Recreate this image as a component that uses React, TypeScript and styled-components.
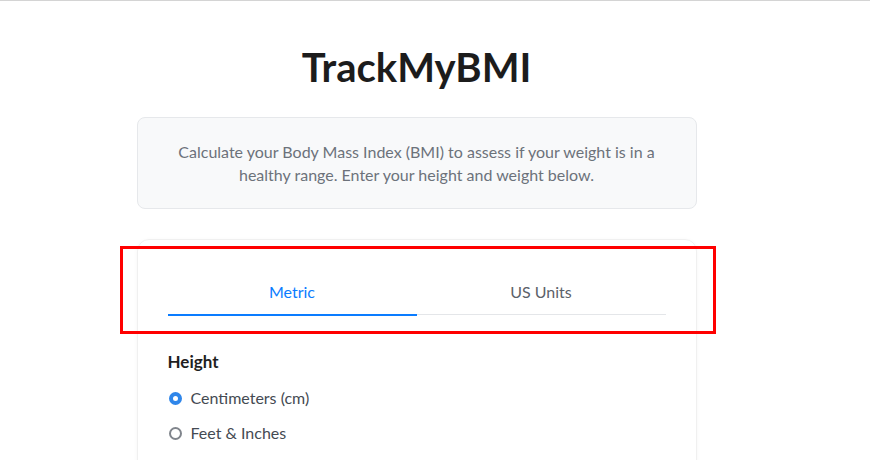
import { useState } from "react";
import styled, { createGlobalStyle } from "styled-components";

const GlobalStyle = createGlobalStyle`
  html, body {
    margin: 0;
    padding: 0;
    background: #ffffff;
    font-family: "Lato", "Liberation Sans", sans-serif;
    color: #212529;
  }
`;

const Page = styled.div`
  border-top: 1px solid #d4d4d4;
  padding: 0 37px 40px 0;
  display: flex;
  flex-direction: column;
  align-items: center;
`;

const Title = styled.h1`
  margin: 41px 0 0;
  font-size: 40px;
  line-height: 50px;
  font-weight: 700;
  color: #1c1c1c;
`;

const Intro = styled.div`
  box-sizing: border-box;
  width: 560px;
  margin-top: 25px;
  padding: 22px 40px;
  background: #f8f9fa;
  border: 1px solid #e6e8eb;
  border-radius: 8px;
  text-align: center;
  font-size: 16px;
  line-height: 23px;
  color: #6c727a;
`;

const Card = styled.div`
  box-sizing: border-box;
  width: 560px;
  margin-top: 30px;
  padding: 30px 30px;
  border: 1px solid #f0f0f0;
  border-radius: 12px;
  box-shadow: 0 1px 4px rgba(0, 0, 0, 0.04);
`;

const Tabs = styled.div`
  position: relative;
  display: flex;
`;

const Tab = styled.button<{ $active?: boolean }>`
  flex: 1;
  padding: 10px 0 10px;
  background: none;
  border: none;
  border-bottom: ${(p) => (p.$active ? "2px solid #0a7cff" : "1px solid #e4e6e9")};
  margin-bottom: ${(p) => (p.$active ? "0" : "1px")};
  font-family: inherit;
  font-size: 16px;
  line-height: 24px;
  color: ${(p) => (p.$active ? "#0a7cff" : "#5b6169")};
  cursor: pointer;
`;

// annotation frame drawn over the tab strip
const Highlight = styled.div`
  position: absolute;
  top: -24px;
  left: -48px;
  right: -50px;
  bottom: -18px;
  border: 3px solid #ff0000;
  pointer-events: none;
`;

const Section = styled.div`
  margin-top: 33px;
`;

const SectionTitle = styled.h3`
  margin: 0;
  font-size: 17px;
  line-height: 26px;
  font-weight: 700;
  color: #1f1f1f;
`;

const Option = styled.label`
  display: flex;
  align-items: center;
  gap: 9px;
  margin-top: 11px;
  font-size: 16px;
  line-height: 24px;
  color: #444a52;
  cursor: pointer;
`;

const Radio = styled.span<{ $checked?: boolean }>`
  box-sizing: border-box;
  width: 13px;
  height: 13px;
  margin-left: 1px;
  border-radius: 50%;
  border: ${(p) => (p.$checked ? "4px solid #2f86ea" : "2px solid #80858c")};
  background: #fff;
`;

export default function App() {
  const [system, setSystem] = useState<"metric" | "us">("metric");
  const [unit, setUnit] = useState<"cm" | "ft">("cm");

  return (
    <>
      <GlobalStyle />
      <Page>
        <Title>TrackMyBMI</Title>
        <Intro>
          Calculate your Body Mass Index (BMI) to assess if your weight is in a
          healthy range. Enter your height and weight below.
        </Intro>
        <Card>
          <Tabs>
            <Tab $active={system === "metric"} onClick={() => setSystem("metric")}>Metric</Tab>
            <Tab $active={system === "us"} onClick={() => setSystem("us")}>US Units</Tab>
            <Highlight />
          </Tabs>
          <Section>
            <SectionTitle>Height</SectionTitle>
            <Option onClick={() => setUnit("cm")}>
              <Radio $checked={unit === "cm"} />
              Centimeters (cm)
            </Option>
            <Option onClick={() => setUnit("ft")}>
              <Radio $checked={unit === "ft"} />
              Feet &amp; Inches
            </Option>
          </Section>
        </Card>
      </Page>
    </>
  );
}
